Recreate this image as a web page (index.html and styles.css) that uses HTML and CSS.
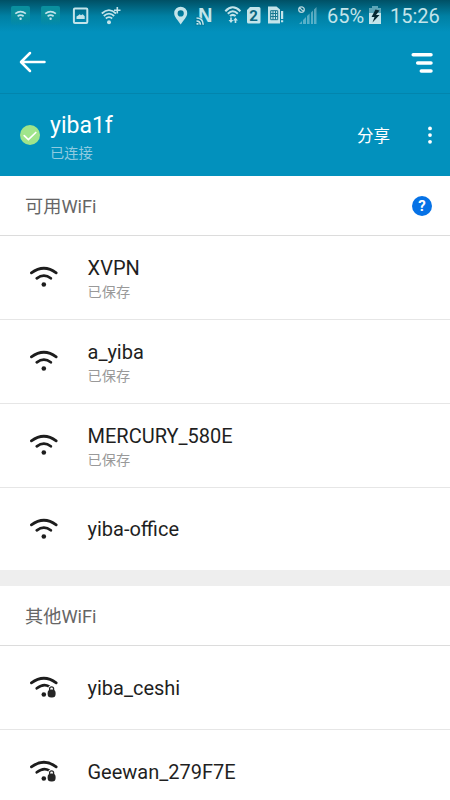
FILE: index.html
```html
<!DOCTYPE html>
<html lang="zh-CN">
<head>
    <meta charset="UTF-8">
    <meta name="viewport" content="width=device-width, initial-scale=1.0">
    <title>WiFi</title>
    <link rel="stylesheet" href="styles.css">
</head>
<body>
    <!-- Shared icons -->
    <svg class="defs" width="0" height="0">
        <symbol id="wifi" viewBox="0 0 30 26">
            <path d="M2.4 8.9Q15 -.4 27.2 8.9M7.8 14.3Q15 8.9 21.8 14.3" fill="none" stroke="#1d1d1d" stroke-width="2.7" stroke-linecap="round"/>
            <circle cx="14.8" cy="20.5" r="2.3" fill="#1d1d1d"/>
        </symbol>
        <symbol id="wifi-lock" viewBox="0 0 30 26">
            <path d="M2.4 8.9Q15 -.4 27.2 8.9M7.8 14.3Q14.5 9 20 12.4" fill="none" stroke="#1d1d1d" stroke-width="2.7" stroke-linecap="round"/>
            <circle cx="14.8" cy="20.5" r="2.3" fill="#1d1d1d"/>
            <path d="M20.6 17v-2.2a2 2 0 0 1 4 0V17" fill="none" stroke="#fff" stroke-width="3"/>
            <path d="M20.6 17v-2.2a2 2 0 0 1 4 0V17" fill="none" stroke="#262626" stroke-width="1.3"/>
            <rect x="18.6" y="15.4" width="8" height="8" rx="3.5" fill="#262626"/>
        </symbol>
    </svg>

    <div class="header">
        <div class="status-bar">
            <svg class="notifications" width="125" height="30" viewBox="0 0 125 30">
                <defs>
                    <linearGradient id="fade" x1="0" y1="0" x2="0" y2="1">
                        <stop offset=".5" stop-color="#0a8f9e"/>
                        <stop offset="1" stop-color="#0a8f9e" stop-opacity=".1"/>
                    </linearGradient>
                </defs>
                <g fill="url(#fade)">
                    <rect x="11" y="6" width="19" height="19" rx="2"/>
                    <rect x="41" y="6" width="19" height="19" rx="2"/>
                </g>
                <g fill="none" stroke="#c3e4ea" stroke-width="1.7">
                    <path d="M15.3 13.6Q20.5 9.7 25.9 13.6M17.6 16.2Q20.6 14.2 23.6 16.2"/>
                    <path d="M45.3 13.6Q50.5 9.7 55.9 13.6M47.6 16.2Q50.6 14.2 53.6 16.2"/>
                    <rect x="73.9" y="8.5" width="13.4" height="14.6" rx="1" stroke-width="2"/>
                    <path d="M101.8 13.5Q109 6.8 116 13.5M103.8 16Q109 11.3 114.2 16M105.8 18.5Q109 15.7 112.2 18.5" stroke-width="1.8"/>
                    <path d="M117.3 7v6.5M114 10.3h6.5" stroke-width="1.6"/>
                </g>
                <g fill="#c3e4ea">
                    <circle cx="20.6" cy="18.8" r="1.2"/>
                    <circle cx="50.6" cy="18.8" r="1.2"/>
                    <path d="M76.5 19v-2.5l2-1.2 1.2-1.1 1.3 1 1.7-1 2 2V19z"/>
                    <circle cx="109" cy="22.2" r="2"/>
                </g>
            </svg>
            <svg class="signals" width="152" height="30" viewBox="170 0 152 30">
                <path d="M180.7 24.5C178 20 174.2 17 174.2 13.2a6.5 6.5 0 0 1 13 0c0 3.8-3.8 6.8-6.5 11.3zM180.7 10.3a3.1 3.1 0 1 0 0 6.2 3.1 3.1 0 0 0 0-6.2z" fill="#c3e4ea" fill-rule="evenodd"/>
                <text x="198" y="21.6" class="nfc">N</text>
                <path d="M195.5 16.5q8.500 0 9.300 9h-9.300z" fill="#00799b"/>
                <g fill="none" stroke="#c3e4ea" stroke-width="1.6">
                    <path d="M196.5 18q6.5 0 6.700 6.700M196.500 21q3.700 0 3.900 3.700"/>
                    <path d="M225.3 11.2Q232.7 3.5 240.4 11.2M227.8 13.7Q232.8 8.8 237.8 13.7M230 16.1Q232.8 13.6 235.600 16.1" stroke-width="2"/>
                    <path d="M231 17.5v3.5M235.5 19.5v3.5"/>
                </g>
                <path d="M196.5 23h2v1.800h-2zM228.6 20h4.800l-2.400 3zM233.1 20.500h4.800l-2.400-3zM250 7h9q1.500 0 1.500 1.500V22q0 1.500-1.500 1.500h-10.500Q247 23.500 247 22V10z" fill="#c3e4ea"/>
                <text x="249.2" y="20.8" class="sim">2</text>
                <path d="M268 6.5h8.500l3.500 3v14h-12zM281 11h2.200v8H281zM281 20.300h2.200v2H281z" fill="#c3e4ea"/>
                <path d="M270.7 10.700h7v9h-7zM270.700 13.500h7M270.700 16.500h7M273 10.700v9M275.500 10.700v9" fill="none" stroke="#16788f"/>
                <path d="M299 24l3-3v3zM303 20l3-3v7h-3zM307 16l2.600-2.600V24H307zM311 12.500l2-2V24h-2zM314 9.500l2.500-2.500v17H314z" fill="#c3e4ea" opacity=".45"/>
                <path d="M298.7 9.600a2.800 2.800 0 1 0 5.600 0 2.800 2.800 0 1 0-5.600 0M299.500 7.600l4 4" fill="none" stroke="#b6d6de" stroke-width="1.3"/>
            </svg>
            <span class="percent">65%</span>
            <svg class="battery" width="14" height="20" viewBox="0 0 14 20">
                <path d="M4 1h6v2h3v5H1V3h3z" fill="#5da7b9"/>
                <path d="M1 8h12v11H1z" fill="#c3e4ea"/>
                <path d="M7.5 4.5L3.5 12h3L4.5 17.5 11.5 10H8l3.5-4.500z" fill="#062932"/>
            </svg>
            <span class="clock">15:26</span>
        </div>

        <div class="toolbar">
            <svg width="27" height="22" viewBox="0 0 27 22">
                <path d="M11 2L2 11l9 9M2.5 11H25.5" fill="none" stroke="#fff" stroke-width="2.5" stroke-linecap="round" stroke-linejoin="round"/>
            </svg>
            <svg width="22" height="24" viewBox="0 0 22 24">
                <path d="M2.2 4.8h17.8M6.7 12.9h13.3M10.3 21h9.7" fill="none" stroke="#fff" stroke-width="3.5" stroke-linecap="round"/>
            </svg>
        </div>

        <div class="connected">
            <svg width="20" height="20" viewBox="0 0 20 20">
                <circle cx="10" cy="10" r="10" fill="#a0e58b"/>
                <path d="M4.2 10.6l4.200 4L15.8 7.5" fill="none" stroke="#fff" stroke-width="1.7" stroke-linecap="round"/>
            </svg>
            <div class="connected-info">
                <div class="connected-name">yiba1f</div>
                <div class="connected-state">已连接</div>
            </div>
            <div class="share">分享</div>
            <svg width="6" height="20" viewBox="0 0 6 20">
                <g fill="#fff">
                    <circle cx="3" cy="3.4" r="1.9"/>
                    <circle cx="3" cy="10.1" r="1.9"/>
                    <circle cx="3" cy="16.8" r="1.9"/>
                </g>
            </svg>
        </div>
    </div>

    <!-- Saved networks -->
    <div class="section">
        <div class="section-title">
            <span>可用WiFi</span>
            <span class="help">?</span>
        </div>
        <div class="row">
            <svg class="wifi"><use href="#wifi"/></svg>
            <div>
                <div class="name">XVPN</div>
                <div class="state">已保存</div>
            </div>
        </div>
        <div class="row">
            <svg class="wifi"><use href="#wifi"/></svg>
            <div>
                <div class="name">a_yiba</div>
                <div class="state">已保存</div>
            </div>
        </div>
        <div class="row">
            <svg class="wifi"><use href="#wifi"/></svg>
            <div>
                <div class="name">MERCURY_580E</div>
                <div class="state">已保存</div>
            </div>
        </div>
        <div class="row last">
            <svg class="wifi"><use href="#wifi"/></svg>
            <div class="name">yiba-office</div>
        </div>
    </div>

    <!-- Other networks -->
    <div class="section">
        <div class="section-title">
            <span>其他WiFi</span>
        </div>
        <div class="row">
            <svg class="wifi"><use href="#wifi-lock"/></svg>
            <div class="name">yiba_ceshi</div>
        </div>
        <div class="row">
            <svg class="wifi"><use href="#wifi-lock"/></svg>
            <div class="name">Geewan_279F7E</div>
        </div>
    </div>
</body>
</html>
```
FILE: styles.css
```css
* { box-sizing: border-box; margin: 0; padding: 0; }
body {
    font-family: Roboto, "Noto Sans CJK SC", sans-serif;
    background-color: #eee;
    width: 450px;
    height: 800px;
    overflow: hidden;
}
svg { display: block; flex-shrink: 0; }
.defs { height: 0; }

/* Header */
.header {
    height: 176px;
    background: linear-gradient(#005065 0, #0080a3 16px, #0291bd 32px);
    color: #fff;
}
.status-bar {
    height: 32px;
    display: flex;
    align-items: flex-start;
    color: #c3e4ea;
    font-size: 20px;
    line-height: 32px;
}
.signals { margin-left: 45px; }
.nfc { font: bold 20px "Liberation Sans", sans-serif; fill: #c3e4ea; }
.sim { font: bold 15px Roboto, sans-serif; fill: #0b6680; }
.percent { margin-left: 5px; width: 39px; }
.battery { margin: 5px 0 0 2px; }
.clock { margin-left: 8px; }
.toolbar {
    height: 62px;
    padding: 0 17px 1px 19px;
    display: flex;
    align-items: center;
    justify-content: space-between;
    border-bottom: 1px solid #0285ad;
}
.connected {
    height: 82px;
    padding: 0 17px 0 20px;
    display: flex;
    align-items: center;
}
.connected-info { margin-left: 10px; padding-top: 6px; flex: 1; }
.connected-name { font-size: 23px; line-height: 30px; }
.connected-state {
    font-size: 14.2px;
    line-height: 24px;
    color: #8fcbe0;
}
.share { font-size: 16.5px; margin-right: 37px; }

/* Network lists */
.section { background-color: #fff; margin-bottom: 16px; }
.section-title {
    height: 60px;
    padding: 0 18px 0 25px;
    display: flex;
    align-items: center;
    justify-content: space-between;
    font-size: 18.2px;
    line-height: 26px;
    color: #666;
    border-bottom: 1px solid #dcdcdc;
}
.section-title span:first-child { margin-top: 2px; }
.section-title .help {
    width: 20px;
    height: 20px;
    margin-top: 1px;
    border-radius: 50%;
    background-color: #0672e6;
    color: #fff;
    font-size: 15px;
    font-weight: bold;
    line-height: 20px;
    text-align: center;
}
.row {
    height: 84px;
    padding-left: 29px;
    display: flex;
    align-items: center;
    border-bottom: 1px solid #e6e6e6;
}
.row.last { height: 82px; border-bottom: none; }
.wifi { width: 30px; height: 26px; margin: 0 28.5px 1px 0; }
.name { font-size: 20px; line-height: 24px; color: #1f1f1f; }
.state {
    font-size: 14.2px;
    line-height: 22px;
    padding-top: 1px;
    margin-bottom: -3px;
    color: #999;
}
```
